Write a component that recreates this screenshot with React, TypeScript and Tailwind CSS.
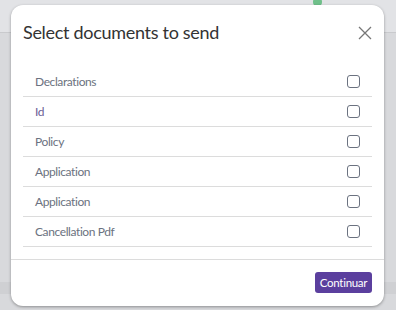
import React from "react";

const items = ["Declarations", "Id", "Policy", "Application", "Application", "Cancellation Pdf"];

export default function App() {
  return (
    <div
      className="relative w-[396px] h-[310px] overflow-hidden bg-[#d8d9dc]"
      style={{ fontFamily: 'Lato, "Noto Sans", sans-serif' }}
    >
      <div className="absolute left-0 top-0 w-full h-[33px] bg-[#e2e3e6] border-b border-[#c9cacd]" />
      <div className="absolute left-0 top-[282px] w-full h-[12px] bg-[#cfd0d3]" />
      <div className="absolute left-[313px] top-[-2px] w-[9px] h-[8px] rounded-full bg-[#6fc08a]" />
      <div className="absolute left-[11px] top-[5px] w-[373px] h-[301px] bg-white rounded-[12px] shadow-[0_1px_3px_rgba(0,0,0,0.35)] flex flex-col">
        <div className="flex items-center justify-between pl-[12px] pr-[12px] pt-[14px] h-[40px]">
          <span className="text-[18px] leading-[26px] tracking-[-0.3px] text-[#333333]">Select documents to send</span>
          <svg width="14" height="14" viewBox="0 0 14 14" className="mt-[2px]">
            <path d="M1 1 L13 13 M13 1 L1 13" stroke="#777" strokeWidth="1.3" />
          </svg>
        </div>
        <div className="mt-[22px] px-[12px] pb-[12px]">
          {items.map((t, i) => (
            <div key={i} className="h-[30px] flex items-center justify-between border-b border-[#dcdcdc] pl-[12px] pr-[12px]">
              <span className={`text-[12px] tracking-[-0.4px] ${i === 1 ? "text-[#6a5d96]" : "text-[#6b7280]"}`}>{t}</span>
              <span className="w-[13px] h-[13px] rounded-[3px] border border-[#6b7280] bg-white" />
            </div>
          ))}
        </div>
        <div className="border-t border-[#dcdcdc] flex justify-end pt-[12px] pr-[12px]">
          <button className="h-[21px] w-[57px] rounded-[3px] bg-[#5b3f9e] text-white text-[11.5px] tracking-[-0.3px] leading-[21px]">
            Continuar
          </button>
        </div>
      </div>
    </div>
  );
}
